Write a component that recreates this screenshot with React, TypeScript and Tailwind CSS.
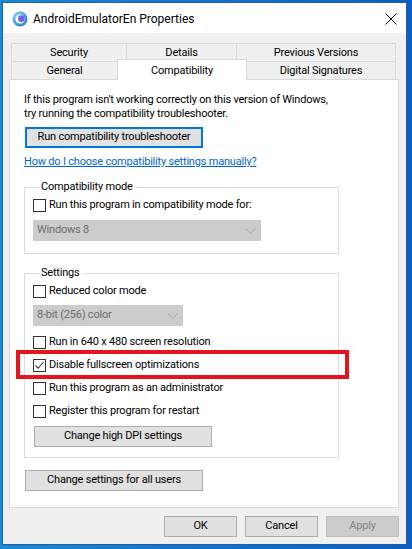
import React from "react";

function CheckBox({ checked = false }: { checked?: boolean }) {
  return (
    <span className="w-[13px] h-[13px] border border-[#333333] bg-white flex items-center justify-center shrink-0">
      {checked && (
        <svg width="11" height="11" viewBox="0 0 11 11">
          <path d="M1.5 5.5 L4.2 8.3 L9.5 2" fill="none" stroke="#333333" strokeWidth="1.1" />
        </svg>
      )}
    </span>
  );
}

function CheckRow({ label, checked = false }: { label: string; checked?: boolean }) {
  return (
    <div className="h-[23px] flex items-center gap-[3px]">
      <CheckBox checked={checked} />
      <span>{label}</span>
    </div>
  );
}

function Chevron() {
  return (
    <svg width="11" height="6" viewBox="0 0 11 6">
      <path d="M0.5 0.5 L5.5 5 L10.5 0.5" fill="none" stroke="#a6a6a6" strokeWidth="1" />
    </svg>
  );
}

function Button({
  children,
  className = "",
  disabled = false,
}: {
  children: React.ReactNode;
  className?: string;
  disabled?: boolean;
}) {
  return (
    <div
      className={
        "h-[21px] flex items-center justify-center border " +
        (disabled
          ? "bg-[#cccccc] border-[#bfbfbf] text-[#838383] "
          : "bg-[#e1e1e1] border-[#adadad] ") +
        className
      }
    >
      {children}
    </div>
  );
}

function AppIcon() {
  return (
    <svg width="16" height="16" viewBox="0 0 16 16">
      <defs>
        <radialGradient id="g" cx="0.35" cy="0.35" r="0.75">
          <stop offset="0" stopColor="#9fe0ff" />
          <stop offset="0.6" stopColor="#3fa2ef" />
          <stop offset="1" stopColor="#2a73d9" />
        </radialGradient>
      </defs>
      <circle cx="8" cy="8" r="7.5" fill="url(#g)" />
      <circle cx="8.2" cy="8" r="4.6" fill="#ffffff" />
      <circle cx="9.4" cy="7.6" r="3.4" fill="#6f63ee" />
    </svg>
  );
}

export default function App() {
  return (
    <div className="w-[412px] h-[549px] bg-gradient-to-r from-[#1a8ad6] to-[#0b5ec4] pt-[2px] pl-[2px] font-['Roboto','Liberation_Sans',Arial,sans-serif] text-[11px] tracking-[-0.2px] text-black overflow-hidden">
      <div className="w-[405px] h-[543px] border border-[#2a5b99] bg-[#f0f0f0] flex flex-col">
        {/* title bar */}
        <div className="h-[30px] bg-white flex items-center pl-[9px] pr-[9px] pt-[2px] shrink-0">
          <AppIcon />
          <span className="ml-[5px] text-[12px] tracking-normal">AndroidEmulatorEn Properties</span>
          <svg className="ml-auto" width="12" height="12" viewBox="0 0 12 12">
            <path d="M0.5 0.5 L11.5 11.5 M11.5 0.5 L0.5 11.5" stroke="#000" strokeWidth="1" />
          </svg>
        </div>

        <div className="pt-[10px] pl-[6px]">
          {/* tabs */}
          <div className="ml-[2px] flex h-[18px]">
            <div className="w-[115px] border-l border-t border-[#d9d9d9] flex items-center justify-center pt-px">Security</div>
            <div className="w-[110px] border-l border-t border-[#d9d9d9] flex items-center justify-center pt-px">Details</div>
            <div className="w-[160px] border-l border-r border-t border-[#d9d9d9] flex items-center justify-center pt-px">Previous Versions</div>
          </div>
          <div className="ml-[2px] flex h-[18px]">
            <div className="w-[106px] border-l border-t border-[#d9d9d9] flex items-center justify-center pt-px">General</div>
            <div className="relative z-10 w-[130px] h-[21px] -mt-[2px] border-l border-r border-t border-[#d9d9d9] bg-white flex justify-center pt-[3px]">
              Compatibility
            </div>
            <div className="w-[149px] border-r border-t border-[#d9d9d9] flex items-center justify-center pt-px">Digital Signatures</div>
          </div>

          {/* panel */}
          <div className="w-[390px] h-[429px] border border-[#d9d9d9] bg-white pt-[13px] pl-[14px]">
            <p className="leading-[14px]">
              If this program isn't working correctly on this version of Windows,
              <br />
              try running the compatibility troubleshooter.
            </p>
            <div className="mt-[6px] ml-px w-[178px] h-[21px] border-2 border-[#0078d7] bg-[#e1e1e1] flex items-center justify-center">
              Run compatibility troubleshooter
            </div>
            <div className="mt-[7px] leading-[14px] text-[#0066cc] underline">
              How do I choose compatibility settings manually?
            </div>

            <fieldset className="mt-[11px] w-[315px] border border-[#dcdcdc] pl-[8px] pb-[12px]">
              <legend className="ml-[6px] px-[2px] leading-[14px]">Compatibility mode</legend>
              <div className="h-[22px] flex items-center gap-[3px]">
                <CheckBox />
                <span>Run this program in compatibility mode for:</span>
              </div>
              <div className="mt-[4px] w-[228px] h-[21px] bg-[#cccccc] flex items-center pl-[4px] pr-[5px] text-[#6d6d6d]">
                <span>Windows 8</span>
                <span className="ml-auto flex">
                  <Chevron />
                </span>
              </div>
            </fieldset>

            <fieldset className="mt-[12px] w-[315px] border border-[#dcdcdc] pl-[8px] pb-[10px]">
              <legend className="ml-[6px] px-[2px] leading-[14px]">Settings</legend>
              <CheckRow label="Reduced color mode" />
              <div className="mt-[2px] w-[150px] h-[21px] bg-[#cccccc] flex items-center pl-[4px] pr-[5px] text-[#6d6d6d]">
                <span>8-bit (256) color</span>
                <span className="ml-auto flex">
                  <Chevron />
                </span>
              </div>
              <div className="mt-[5px]">
                <CheckRow label="Run in 640 x 480 screen resolution" />
              </div>
              <div className="relative">
                <CheckRow label="Disable fullscreen optimizations" checked />
                <span className="absolute -left-[17px] -top-[4px] w-[333px] h-[29px] border-[4px] border-[#e3141c]" />
              </div>
              <CheckRow label="Run this program as an administrator" />
              <CheckRow label="Register this program for restart" />
              <Button className="mt-[3px] ml-px w-[178px]">Change high DPI settings</Button>
            </fieldset>

            <Button className="mt-[12px] ml-px w-[178px]">Change settings for all users</Button>
          </div>

          {/* bottom buttons */}
          <div className="w-[390px] mt-[8px] flex justify-end gap-[8px]">
            <Button className="w-[73px]">OK</Button>
            <Button className="w-[73px]">Cancel</Button>
            <Button className="w-[73px]" disabled>
              Apply
            </Button>
          </div>
        </div>
      </div>
    </div>
  );
}
